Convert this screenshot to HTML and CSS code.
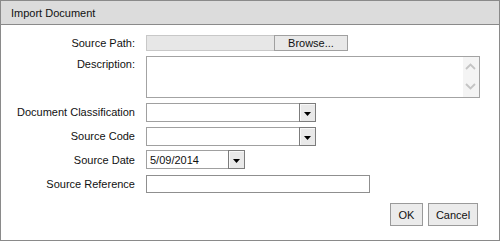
FILE: index.html
```html
<!DOCTYPE html>
<html>
<head>
<meta charset="utf-8">
<title>Import Document</title>
<link rel="stylesheet" href="styles.css">
</head>
<body>
<div class="dialog">
  <div class="titlebar">Import Document</div>
  <div class="form">
    <label class="lbl">Source Path:</label>
    <div class="field path-field">
      <div class="path-input"></div>
      <button class="btn browse">Browse...</button>
    </div>

    <label class="lbl lbl-top">Description:</label>
    <div class="field textarea">
      <div class="ta-body"></div>
      <div class="ta-scroll">
        <svg width="16" height="40" viewBox="0 0 16 40">
          <polyline points="3,12 7.5,7.5 12,12" fill="none" stroke="#c4c4c4" stroke-width="1.8"/>
          <polyline points="3,27 7.5,31.5 12,27" fill="none" stroke="#c4c4c4" stroke-width="1.8"/>
        </svg>
      </div>
    </div>

    <label class="lbl">Document Classification</label>
    <div class="field select sel-wide">
      <div class="value"></div>
      <div class="arrow"><svg width="7" height="4" viewBox="0 0 7 4"><polygon points="0,0 7,0 3.5,4" fill="#000"/></svg></div>
    </div>

    <label class="lbl">Source Code</label>
    <div class="field select sel-wide">
      <div class="value"></div>
      <div class="arrow"><svg width="7" height="4" viewBox="0 0 7 4"><polygon points="0,0 7,0 3.5,4" fill="#000"/></svg></div>
    </div>

    <label class="lbl">Source Date</label>
    <div class="field select sel-date">
      <div class="value">5/09/2014</div>
      <div class="arrow"><svg width="7" height="4" viewBox="0 0 7 4"><polygon points="0,0 7,0 3.5,4" fill="#000"/></svg></div>
    </div>

    <label class="lbl">Source Reference</label>
    <div class="field text-input"></div>
  </div>
  <div class="actions">
    <button class="btn action ok">OK</button>
    <button class="btn action cancel">Cancel</button>
  </div>
</div>
</body>
</html>
```

FILE: styles.css
```css
* { box-sizing: border-box; }

html, body {
  margin: 0;
  padding: 0;
  background: #ffffff;
}

body {
  font-family: "Liberation Sans", Arial, sans-serif;
  font-size: 11px;
  color: #111;
}

.dialog {
  width: 500px;
  height: 241px;
  border: 1px solid #8a8a8a;
  background: #ffffff;
}

.titlebar {
  height: 24px;
  background: #dcdcdc;
  border-bottom: 1px solid #8a8a8a;
  padding-left: 10px;
  display: flex;
  align-items: center;
  font-size: 11px;
  color: #111;
}

.form {
  display: grid;
  grid-template-columns: 134px max-content;
  grid-template-rows: 16px 42px 19px 18px 20px 19px;
  column-gap: 11px;
  row-gap: 5px;
  padding-top: 10px;
}

.lbl {
  text-align: right;
  align-self: center;
  white-space: nowrap;
  line-height: 13px;
}

.lbl-top {
  align-self: start;
  padding-top: 2px;
}

.field {
  align-self: start;
}

.path-field {
  display: flex;
  height: 16px;
}

.path-input {
  width: 128px;
  height: 16px;
  background: #e7e7e7;
  border: 1px solid #c8c8c8;
  border-right: none;
}

.btn {
  font-family: "Liberation Sans", Arial, sans-serif;
  font-size: 11px;
  color: #111;
  background: #e8e8e8;
  border: 1px solid #a0a0a0;
  padding: 0;
  margin: 0;
  display: flex;
  align-items: center;
  justify-content: center;
}

.browse {
  width: 74px;
  height: 16px;
}

.textarea {
  width: 334px;
  height: 42px;
  border: 1px solid #a3a3a3;
  display: flex;
  background: #fff;
}

.ta-body {
  flex: 1;
}

.ta-scroll {
  width: 16px;
  background: #f4f4f4;
  display: flex;
}

.select {
  display: flex;
  height: 19px;
  border: 1px solid #a0a0a0;
  background: #fff;
}

.sel-wide { width: 170px; height: 19px; }
.sel-date { width: 99px; height: 19px; }

.select .value {
  flex: 1;
  padding-left: 3px;
  display: flex;
  align-items: center;
}

.select .arrow {
  width: 17px;
  margin: -1px -1px -1px 0;
  border: 1px solid #7c7c7c;
  background: #e9e9e9;
  box-shadow: inset 1px 1px 0 #f8f8f8;
  display: flex;
  align-items: center;
  justify-content: center;
  padding-top: 2px;
}

.text-input {
  width: 224px;
  height: 18px;
  border: 1px solid #8f8f8f;
  background: #fff;
}

.actions {
  display: flex;
  justify-content: flex-end;
  gap: 5px;
  margin-top: 9px;
  padding-right: 21px;
}

.action {
  height: 23px;
  border: 1px solid #9a9a9a;
  background: #ebebeb;
}

.ok { width: 33px; }
.cancel { width: 50px; }
```
